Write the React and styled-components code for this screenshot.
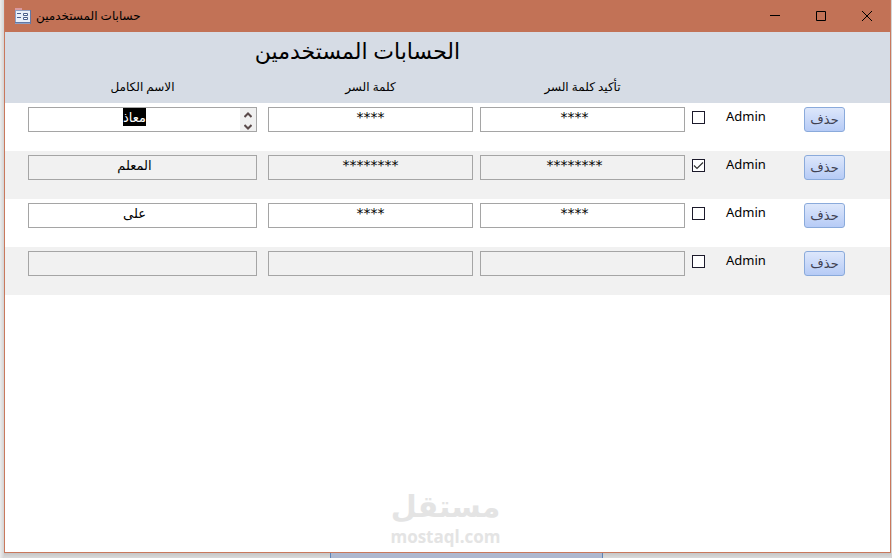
import React, { useEffect, useRef, useState } from "react";
import styled, { createGlobalStyle } from "styled-components";

const GlobalStyle = createGlobalStyle`
  * { box-sizing: border-box; }
  body {
    margin: 0;
    background: #dcdcdc;
    font-family: "Noto Sans", "DejaVu Sans", sans-serif;
    font-size: 13px;
    color: #000;
  }
`;

const Desktop = styled.div`
  display: flex;
  flex-direction: column;
  min-height: 100vh;
  padding: 0 1px 0 4px;
  background: linear-gradient(to right, #ececec, #d4d4d4 4px);
`;

const Window = styled.main`
  flex: 1;
  display: flex;
  flex-direction: column;
  border: 1px solid #c9785c;
  border-top: 0;
  background: #fff;
`;

const TitleBar = styled.header`
  display: flex;
  align-items: center;
  height: 32px;
  padding-left: 10px;
  background: #c27256;
`;

const WindowTitle = styled.h1`
  flex: 1;
  margin: 0 0 0 5px;
  font-size: 12px;
  font-weight: 400;
  line-height: 16px;
`;

const CaptionButton = styled.button`
  display: flex;
  align-items: center;
  justify-content: center;
  width: 46px;
  height: 30px;
  padding: 0;
  border: 0;
  background: none;
`;

const FormHeader = styled.section`
  height: 71px;
  background: #d6dce5;
`;

const FormTitle = styled.h2`
  margin: 0;
  padding: 0 180px 4px 0;
  text-align: center;
  font-size: 22px;
  font-weight: 400;
  line-height: 36px;
`;

const columns = `
  display: grid;
  grid-template-columns: 233fr 205fr 205fr 13px 85px 41px;
  column-gap: 7px;
  padding: 0 45px 0 23px;
`;

const Labels = styled.div`
  ${columns}
  padding-top: 5px;
  text-align: center;
  font-size: 12px;
  line-height: 20px;
`;

const ColumnLabel = styled.span`
  margin-right: ${(p) => (p.$first ? "4px" : "0")};
`;

const Record = styled.div`
  ${columns}
  align-items: start;
  height: 48px;
  padding-top: 4px;
  background: ${(p) => (p.$shaded ? "#f1f1f1" : "#fff")};
`;

const Field = styled.div`
  display: flex;
  min-width: 0;
  height: 25px;
  margin-right: ${(p) => (p.$first ? "4px" : "0")};
  border: 1px solid #a5a5a5;
`;

const FieldInput = styled.input`
  flex: 1;
  min-width: 0;
  height: 18px;
  padding: 0 ${(p) => (p.$inset ? "16px" : "0")} 0 0;
  border: 0;
  outline: 0;
  background: transparent;
  color: #000;
  font: inherit;
  line-height: 18px;
  text-align: center;
  &::selection { background: #000; color: #fff; }
`;

const SecretInput = styled(FieldInput)`
  font-family: "DejaVu Sans", sans-serif;
  font-size: 14px;
`;

const Scroller = styled.div`
  display: flex;
  flex-direction: column;
  width: 16px;
  background: #f0f0f0;
`;

const ScrollButton = styled.button`
  flex: 1;
  display: flex;
  align-items: center;
  justify-content: center;
  padding: 3px 0 0;
  border: 0;
  background: none;
`;

const Check = styled.input`
  appearance: none;
  width: 13px;
  height: 13px;
  margin: 4px 0 0;
  border: 1px solid #1c1a2b;
  background: #fff;
  &:checked {
    background: #fff url("data:image/svg+xml,%3Csvg xmlns='http://www.w3.org/2000/svg' viewBox='0 0 11 11'%3E%3Cpath d='M1 5.5 4 8.5 10 2.5' fill='none' stroke='%23333' stroke-width='1.2'/%3E%3C/svg%3E");
  }
`;

const CheckLabel = styled.label`
  padding-left: 14px;
  font-size: 13px;
  line-height: 18px;
`;

const DeleteButton = styled.button`
  height: 25px;
  padding: 0 0 2px;
  border: 1px solid #8aaadb;
  border-radius: 3px;
  background: linear-gradient(#dde7fb, #b6cbf6);
  color: #404050;
  font: inherit;
  font-size: 13px;
  line-height: 20px;
`;

const Watermark = styled.div`
  display: flex;
  flex-direction: column;
  align-items: center;
  margin: auto 0 5px;
  padding-right: 4px;
  color: #e4e4e4;
  font-weight: 700;
`;

const WatermarkName = styled.span`
  font-family: "DejaVu Sans", sans-serif;
  font-size: 30px;
  line-height: 40px;
`;

const WatermarkSite = styled.span`
  font-family: "Open Sans", sans-serif;
  font-size: 17px;
  line-height: 20px;
`;

const Behind = styled.div`
  display: grid;
  grid-template-columns: 326fr 273px 288fr;
  height: 5px;
  background: linear-gradient(#c6c6c6, #dadada);
`;

const BehindPanel = styled.div`
  grid-column: 2;
  border: 1px solid #5f83b5;
  border-width: 0 1px;
  background: #aeb8cf;
`;

const FormIcon = () => (
  <svg width="16" height="16" viewBox="0 0 16 16" aria-hidden="true">
    <path d="M0 1h7v1h9v14H0z" fill="#8fa0c4" />
    <path d="M1 3h14v11H1z" fill="#eaf0fa" />
    <path d="M0 0h7v2H0z" fill="#d99aa0" />
    <path d="M2 5.500h4M2 9.500h4" stroke="#4a5f8c" />
    <path d="M8.500 5.500h4v2h-4zM8.500 9.500h4v2h-4z" fill="#fff" stroke="#4a5f8c" />
    <path d="M15.500 2v14M0 14.500h16" stroke="#6278a5" />
  </svg>
);

const Chevron = ({ d }) => (
  <svg width="8" height="6" viewBox="0 0 8 6" aria-hidden="true">
    <path d={d} fill="none" stroke="#5a4a4a" strokeWidth="2" />
  </svg>
);

const captions = [
  ["تصغير", "M0 4.500h10"],
  ["تكبير", "M.5.500h9v9h-9z"],
  ["إغلاق", "M0 0 10 10M10 0 0 10"],
];

const users = [
  { name: "معاذ", secret: "****", admin: false },
  { name: "المعلم", secret: "********", admin: true },
  { name: "على", secret: "****", admin: false },
  { name: "", secret: "", admin: false },
];

function UserRecord({ user, index }) {
  const nameRef = useRef(null);
  const [admin, setAdmin] = useState(user.admin);
  const current = index === 0;
  const id = `admin-${index}`;

  useEffect(() => {
    if (current) {
      nameRef.current.focus();
      nameRef.current.select();
    }
  }, [current]);

  return (
    <Record $shaded={index % 2 === 1}>
      <Field $first>
        <FieldInput ref={nameRef} dir="rtl" aria-label="الاسم الكامل" defaultValue={user.name} $inset={!current} />
        {current && (
          <Scroller>
            <ScrollButton aria-label="السابق"><Chevron d="M.5 5 4 1.500 7.500 5" /></ScrollButton>
            <ScrollButton aria-label="التالي"><Chevron d="M.5 1 4 4.500 7.500 1" /></ScrollButton>
          </Scroller>
        )}
      </Field>
      <Field><SecretInput aria-label="كلمة السر" defaultValue={user.secret} /></Field>
      <Field><SecretInput aria-label="تأكيد كلمة السر" defaultValue={user.secret} $inset /></Field>
      <Check id={id} type="checkbox" checked={admin} onChange={(e) => setAdmin(e.target.checked)} />
      <CheckLabel htmlFor={id}>Admin</CheckLabel>
      <DeleteButton type="button">حذف</DeleteButton>
    </Record>
  );
}

export default function App() {
  return (
    <Desktop>
      <GlobalStyle />
      <Window>
        <TitleBar>
          <FormIcon />
          <WindowTitle>حسابات المستخدمين</WindowTitle>
          {captions.map(([label, d]) => (
            <CaptionButton key={label} aria-label={label}>
              <svg width="10" height="10" viewBox="0 0 10 10" aria-hidden="true">
                <path d={d} fill="none" stroke="#000" />
              </svg>
            </CaptionButton>
          ))}
        </TitleBar>
        <FormHeader>
          <FormTitle>الحسابات المستخدمين</FormTitle>
          <Labels>
            <ColumnLabel $first>الاسم الكامل</ColumnLabel>
            <ColumnLabel>كلمة السر</ColumnLabel>
            <ColumnLabel>تأكيد كلمة السر</ColumnLabel>
          </Labels>
        </FormHeader>
        {users.map((user, index) => (
          <UserRecord key={index} user={user} index={index} />
        ))}
        <Watermark>
          <WatermarkName>مستقل</WatermarkName>
          <WatermarkSite>mostaql.com</WatermarkSite>
        </Watermark>
      </Window>
      <Behind><BehindPanel /></Behind>
    </Desktop>
  );
}
